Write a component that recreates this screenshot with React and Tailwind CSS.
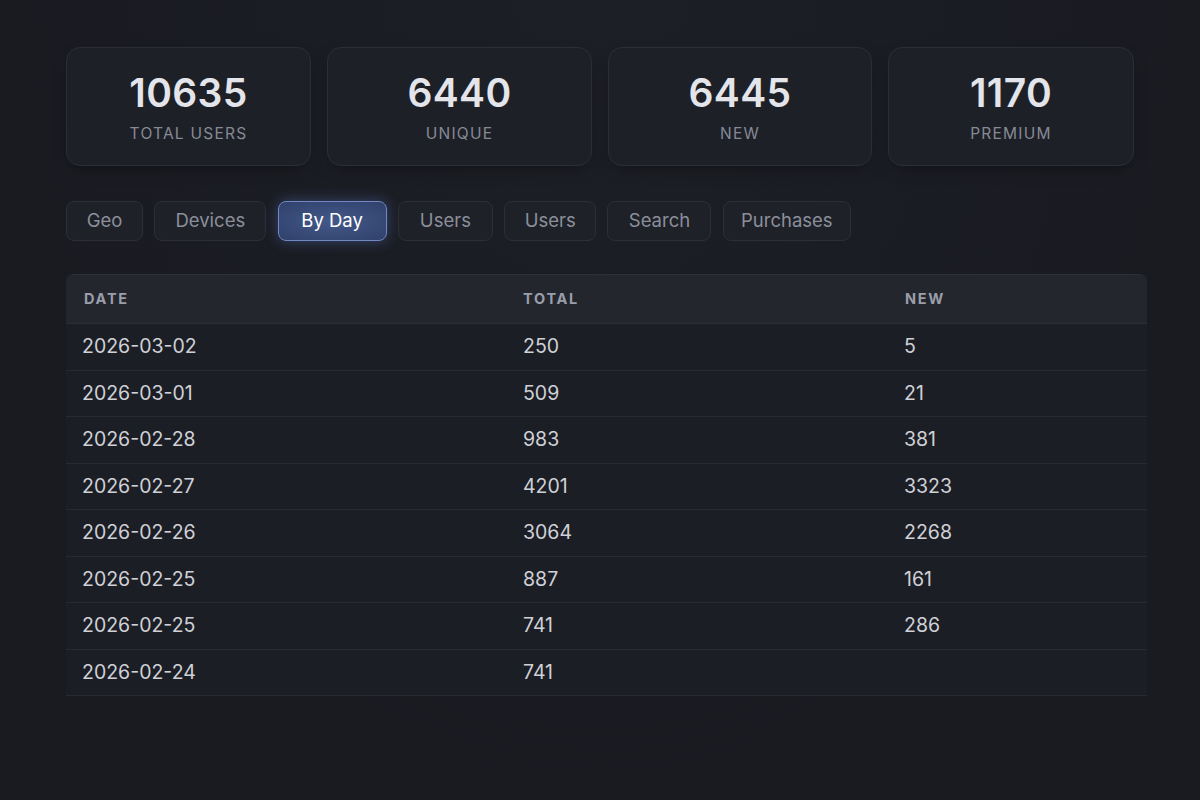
const stats = [
  { value: "10635", label: "Total users" },
  { value: "6440", label: "Unique" },
  { value: "6445", label: "New" },
  { value: "1170", label: "Premium" },
];

const tabs = [
  { name: "Geo", width: "w-[77px]" },
  { name: "Devices", width: "w-[112px]" },
  { name: "By Day", width: "w-[109px]", active: true },
  { name: "Users", width: "w-[95px]" },
  { name: "Users", width: "w-[92px]" },
  { name: "Search", width: "w-[104px]" },
  { name: "Purchases", width: "w-[128px]" },
];

const rows = [
  ["2026-03-02", "250", "5"],
  ["2026-03-01", "509", "21"],
  ["2026-02-28", "983", "381"],
  ["2026-02-27", "4201", "3323"],
  ["2026-02-26", "3064", "2268"],
  ["2026-02-25", "887", "161"],
  ["2026-02-25", "741", "286"],
  ["2026-02-24", "741", ""],
];

export default function App() {
  return (
    <div className="min-h-screen w-full bg-[radial-gradient(ellipse_at_top,#1d1f26_0%,#191b21_70%)] font-['Inter',sans-serif] text-[#d2d4da]">
      <div className="pl-[66px] pr-[53px] pt-[47px]">
        <div className="grid w-[1068px] grid-cols-[245px_265px_264px_246px] gap-4">
          {stats.map((stat) => (
            <div
              key={stat.label}
              className="flex h-[119px] flex-col items-center rounded-[14px] border border-[#2c2e37] bg-[#1e2028] pt-[22px] shadow-[0_6px_18px_-8px_rgba(0,0,0,0.6)]"
            >
              <div className="text-[39px] font-semibold leading-[46px] tracking-[0.01em] text-[#e4e5ea]">{stat.value}</div>
              <div className="mt-[9px] text-[15.5px] uppercase leading-[18px] tracking-[0.08em] text-[#868a95]">{stat.label}</div>
            </div>
          ))}
        </div>

        <div className="mt-[35px] flex gap-[11.3px]">
          {tabs.map((tab, index) => (
            <button
              key={index}
              type="button"
              className={
                tab.active
                  ? `${tab.width} h-[40px] rounded-lg border border-[#7089c4] bg-[radial-gradient(ellipse_at_center,#43598a_0%,#30406a_100%)] text-[18.5px] text-white shadow-[0_0_14px_rgba(90,120,200,0.45)]`
                  : `${tab.width} h-[40px] rounded-lg border border-[#2d2f38] bg-[#1f2129] text-[18.5px] text-[#8b8f9a]`
              }
            >
              {tab.name}
            </button>
          ))}
        </div>

        <div className="mt-[33px] w-[1081px] overflow-hidden rounded-t-lg border-t border-[#2e3039]">
          <div className="grid h-[49px] grid-cols-[441px_381px_1fr] items-center border-b border-[#2b2d35] bg-[#24262e] text-[14.5px] font-bold uppercase tracking-[0.12em] text-[#9a9eaa]">
            <div className="pl-[18px]">Date</div>
            <div className="pl-[16px]">Total</div>
            <div className="pl-[17px]">New</div>
          </div>
          {rows.map((row, index) => (
            <div
              key={index}
              className="grid h-[46.5px] grid-cols-[441px_381px_1fr] items-center border-b border-[#282a32] bg-[#1c1e25] text-[19.5px] text-[#cfd1d7]"
            >
              <div className="pl-[16px]">{row[0]}</div>
              <div className="pl-[16px]">{row[1]}</div>
              <div className="pl-[16px]">{row[2]}</div>
            </div>
          ))}
        </div>
      </div>
    </div>
  );
}
